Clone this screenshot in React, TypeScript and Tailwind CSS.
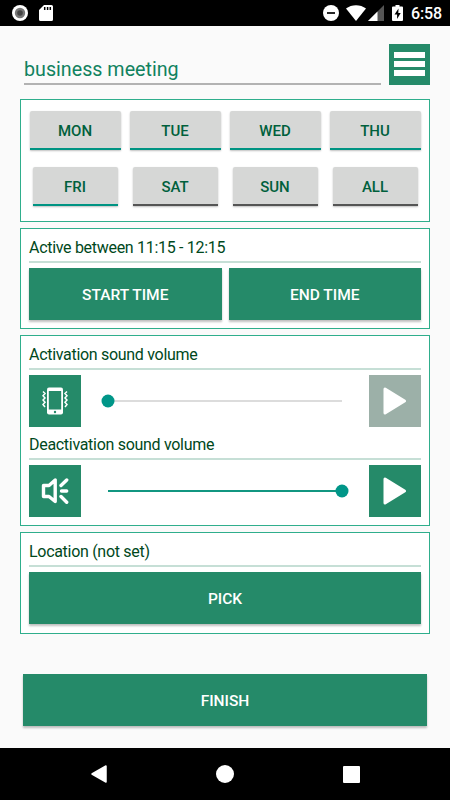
import { useState, type ReactNode } from 'react';
import clsx from 'clsx';

const DAYS = ['MON', 'TUE', 'WED', 'THU', 'FRI', 'SAT', 'SUN', 'ALL'];

function StatusBar() {
  return (
    <div className="h-[26px] shrink-0 bg-black flex items-center justify-between pl-3 pr-[9px] text-white">
      <div className="flex items-center gap-[11px]">
        <svg width="16" height="16" viewBox="0 0 16 16">
          <circle cx="8" cy="8" r="8" fill="#fff" />
          <circle cx="8" cy="8" r="5.2" fill="#777" />
          <circle cx="8" cy="8" r="2.8" fill="#444" />
        </svg>
        <svg width="14" height="16" viewBox="0 0 14 16">
          <path d="M5 0h7.5A1.5 1.5 0 0 1 14 1.5v13a1.5 1.5 0 0 1-1.5 1.5h-11A1.5 1.5 0 0 1 0 14.5V5z" fill="#fff" />
          <path d="M5.7 2v3M8.6 2v3M11.3 2v3" stroke="#000" strokeWidth="1.5" />
        </svg>
      </div>
      <div className="flex items-center">
        <svg width="16" height="16" viewBox="0 0 16 16">
          <circle cx="8" cy="8" r="8" fill="#fff" />
          <path d="M4 8h8" stroke="#000" strokeWidth="1.7" />
        </svg>
        <svg className="ml-[7px]" width="20" height="16" viewBox="0 0 20 16">
          <path d="M0 3.5C5.5-1 14.5-1 20 3.5L10 16z" fill="#fff" />
        </svg>
        <svg className="ml-[2px]" width="16" height="16" viewBox="0 0 16 16">
          <path d="M16 0v16H0z" fill="#555" />
          <path d="M9.5 6.5V16H0z" fill="#fff" />
        </svg>
        <svg className="ml-[8px]" width="11" height="16" viewBox="0 0 11 16">
          <path d="M3.5 0h4v1.5H10a1 1 0 0 1 1 1V15a1 1 0 0 1-1 1H1a1 1 0 0 1-1-1V2.5a1 1 0 0 1 1-1h2.5z" fill="#fff" />
          <path d="M6.5 3.5 2.5 9.5h2.6V14l3.6-6H6.3z" fill="#000" />
        </svg>
        <span className="ml-2 w-[30px] text-[16px] leading-none font-medium tracking-[-0.1px] relative top-px">6:58</span>
      </div>
    </div>
  );
}

function Panel({ className, children }: { className: string; children: ReactNode }) {
  return (
    <section className={clsx('border border-[#2fae8c] bg-white px-2 flex flex-col', className)}>
      {children}
    </section>
  );
}

// Caption with the pale divider under it
function Caption({ children }: { children: ReactNode }) {
  return (
    <div className="h-[27px] shrink-0 border-b-2 border-[#c6dfd6] text-[16px] leading-[23px] tracking-[-0.3px] text-[#00481c]">
      {children}
    </div>
  );
}

function ActionButton({ className, children }: { className?: string; children: ReactNode }) {
  return (
    <button
      className={clsx(
        'h-[52px] shrink-0 bg-[#258a69] pt-[3px] text-white text-[15.5px] font-medium shadow-[0_2px_2px_rgba(0,0,0,0.25)]',
        className,
      )}
    >
      {children}
    </button>
  );
}

function VibrateIcon() {
  return (
    <svg width="26" height="28" viewBox="0 0 26 28">
      <rect x="5" y="0.5" width="16" height="27" rx="2" fill="#fff" />
      <rect x="6.8" y="4" width="12.4" height="18.5" fill="#258a69" />
      <circle cx="13" cy="25" r="1.2" fill="#258a69" />
      <path
        d="M1 4.5l2 2-2 2.2 2 2.2-2 2.2 2 2.2-2 2.2 2 2.5M25 4.5l-2 2 2 2.2-2 2.2 2 2.2-2 2.2 2 2.2-2 2.5"
        fill="none"
        stroke="#fff"
        strokeWidth="1.5"
      />
    </svg>
  );
}

function SpeakerIcon() {
  return (
    <svg width="28" height="28" viewBox="0 0 28 28" fill="none" stroke="#fff" strokeWidth="3.4">
      <path d="M2.5 8.5H8L14.2 3v21.5L8 19.5H2.5z" strokeLinejoin="round" />
      <path d="M20 8.500l5.7-5.500M20.500 14H25.700M20 19.500l5.700 5.700" strokeLinecap="round" />
    </svg>
  );
}

function PlayIcon() {
  return (
    <svg width="24" height="28" viewBox="0 0 24 28">
      <path d="M2 2v24l19.5-12z" fill="#fff" stroke="#fff" strokeWidth="3" strokeLinejoin="round" />
    </svg>
  );
}

function VolumeRow({ value, icon }: { value: number; icon: ReactNode }) {
  return (
    <div className="h-[52px] mt-[5px] shrink-0 flex items-center">
      <button className="size-[52px] bg-[#258a69] flex items-center justify-center">{icon}</button>
      <div className="relative flex-1 mx-[27px] h-[2px] bg-[#dcdcdc]">
        <div className="h-full bg-[#119681]" style={{ width: `${value}%` }} />
        <div
          className="absolute top-1/2 size-[13px] -translate-x-1/2 -translate-y-1/2 rounded-full bg-[#009688]"
          style={{ left: `${value}%` }}
        />
      </div>
      <button
        disabled={value === 0}
        className="size-[52px] bg-[#258a69] disabled:bg-[#9cb0a8] flex items-center justify-center"
      >
        <PlayIcon />
      </button>
    </div>
  );
}

export default function App() {
  const [active, setActive] = useState(['MON', 'TUE', 'WED', 'THU', 'FRI']);

  const toggle = (day: string) =>
    setActive((prev) => (prev.includes(day) ? prev.filter((d) => d !== day) : [...prev, day]));

  return (
    <div className="w-[450px] h-[800px] flex flex-col overflow-hidden bg-[#fafafa] font-[Roboto,sans-serif]">
      <StatusBar />

      <main className="flex-1 px-5 pt-[18px] flex flex-col">
        <header className="h-[41px] shrink-0 flex justify-between pl-1">
          <input
            defaultValue="business meeting"
            className="w-[357px] h-[41px] pt-[12px] border-b-2 border-[#b2b2b2] text-[19.7px] text-[#118260] outline-none"
          />
          <button className="size-[41px] bg-[#258a69] pb-px flex flex-col items-center justify-center gap-[3px]">
            <span className="w-[31px] h-[6px] bg-white" />
            <span className="w-[31px] h-[6px] bg-white" />
            <span className="w-[31px] h-[6px] bg-white" />
          </button>
        </header>

        <Panel className="mt-[14px] h-[123px] shrink-0">
          <div className="mt-[11px] grid grid-cols-4 gap-x-2 gap-y-[17px]">
            {DAYS.map((day, i) => (
              <button
                key={day}
                onClick={() => toggle(day)}
                className={clsx(
                  'h-[39px] rounded-t-[2px] border-b-2 bg-[#d6d7d6] pt-1 text-[15px] font-medium text-[#00603c] justify-self-center shadow-[0_1px_2px_rgba(0,0,0,0.25)]',
                  i < 4 ? 'w-[91px]' : 'w-[85px]',
                  active.includes(day) ? 'border-[#009483]' : 'border-[#555]',
                )}
              >
                {day}
              </button>
            ))}
          </div>
        </Panel>

        <Panel className="mt-1.5 h-[101px] shrink-0 pt-[7px]">
          <Caption>Active between 11:15 - 12:15</Caption>
          <div className="mt-[5px] grid grid-cols-2 gap-[7px]">
            <ActionButton>START TIME</ActionButton>
            <ActionButton>END TIME</ActionButton>
          </div>
        </Panel>

        <Panel className="mt-1.5 h-[191px] shrink-0 pt-[7px]">
          <Caption>Activation sound volume</Caption>
          <VolumeRow value={0} icon={<VibrateIcon />} />
          <div className="mt-[6px]">
            <Caption>Deactivation sound volume</Caption>
          </div>
          <VolumeRow value={100} icon={<SpeakerIcon />} />
        </Panel>

        <Panel className="mt-1.5 h-[102px] shrink-0 pt-[7px]">
          <Caption>Location (not set)</Caption>
          <ActionButton className="mt-[5px]">PICK</ActionButton>
        </Panel>

        <ActionButton className="mt-10 mx-[3px]">FINISH</ActionButton>
      </main>

      <nav className="h-[52px] shrink-0 bg-black flex items-center pl-[91px] pr-[90px] justify-between">
        <svg width="16" height="18" viewBox="0 0 16 18">
          <path d="M15 1v16L1 9z" fill="#fff" stroke="#fff" strokeWidth="1.5" strokeLinejoin="round" />
        </svg>
        <span className="size-[18px] rounded-full bg-white" />
        <span className="size-[17px] rounded-[1px] bg-white" />
      </nav>
    </div>
  );
}
